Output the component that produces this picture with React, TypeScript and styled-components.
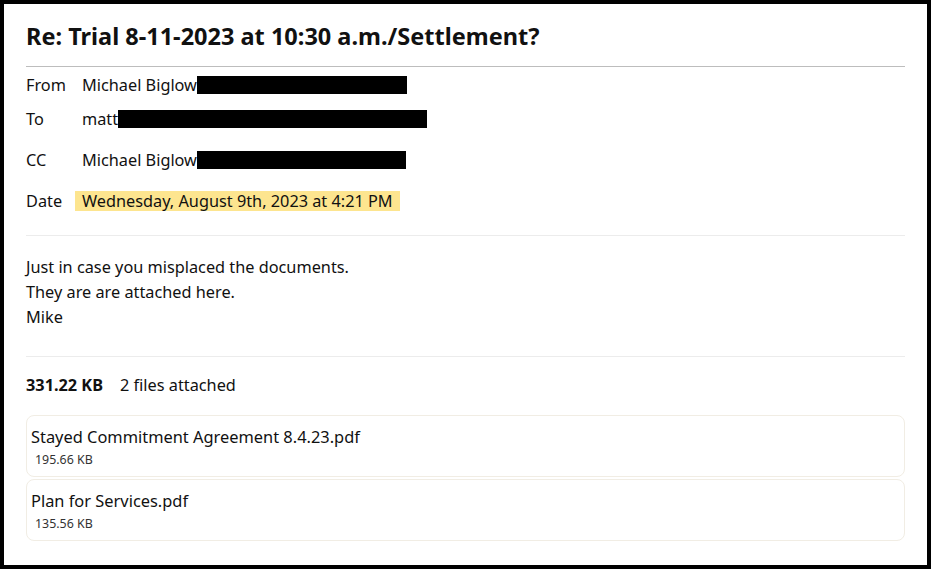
import React from 'react';
import styled, { createGlobalStyle } from 'styled-components';

const GlobalStyle = createGlobalStyle`
  html, body {
    margin: 0;
    padding: 0;
    background: #000;
  }
  body {
    font-family: "Noto Sans", "Open Sans", sans-serif;
    color: #111;
  }
`;

const Frame = styled.div`
  box-sizing: border-box;
  width: 931px;
  height: 569px;
  border: 4px solid #000;
  background: #fff;
  padding: 17px 22px 0 22px;
  overflow: hidden;
`;

const Subject = styled.h1`
  margin: 0;
  font-size: 23.5px;
  line-height: 31px;
  font-weight: 700;
  padding-bottom: 14px;
  border-bottom: 1px solid #bdbdbd;
`;

const Headers = styled.div`
  display: grid;
  grid-template-columns: 56px 1fr;
  padding-top: 1px;
  padding-bottom: 17px;
  border-bottom: 1px solid #ececec;
`;

const Label = styled.div<{ $h: number }>`
  height: ${(p) => p.$h}px;
  display: flex;
  align-items: center;
  font-size: 16.3px;
`;

const Value = styled.div<{ $h: number }>`
  height: ${(p) => p.$h}px;
  display: flex;
  align-items: center;
  font-size: 16.3px;
`;

const Redacted = styled.span<{ $w: number }>`
  display: inline-block;
  width: ${(p) => p.$w}px;
  height: 18px;
  background: #000;
`;

const Highlight = styled.span`
  margin-left: -7px;
  padding: 0 7px;
  height: 20px;
  line-height: 20px;
  background: #fde58f;
`;

const Body = styled.div`
  padding: 19px 0 26px 0;
  font-size: 16.3px;
  line-height: 25px;
  border-bottom: 1px solid #ececec;
`;

const Summary = styled.div`
  display: flex;
  gap: 17px;
  align-items: center;
  height: 60px;
  margin-top: -2px;
  font-size: 16.3px;
  strong {
    font-weight: 700;
  }
`;

const AttachmentList = styled.div`
  display: flex;
  flex-direction: column;
  gap: 2px;
`;

const Attachment = styled.div`
  box-sizing: border-box;
  height: 62px;
  border: 1px solid #f1ede4;
  border-radius: 8px;
  padding: 10px 4px 0 4px;
`;

const FileName = styled.div`
  font-size: 16.4px;
  line-height: 22px;
`;

const FileSize = styled.div`
  margin-top: 4px;
  padding-left: 4px;
  font-size: 12.4px;
  line-height: 16px;
  color: #333;
`;

const rows: { label: string; h: number; content: React.ReactNode }[] = [
  {
    label: 'From',
    h: 34,
    content: (
      <>
        Michael Biglow<Redacted $w={210} />
      </>
    ),
  },
  {
    label: 'To',
    h: 34,
    content: (
      <>
        matt<Redacted $w={309} />
      </>
    ),
  },
  {
    label: 'CC',
    h: 48,
    content: (
      <>
        Michael Biglow<Redacted $w={209} />
      </>
    ),
  },
  {
    label: 'Date',
    h: 34,
    content: <Highlight>Wednesday, August 9th, 2023 at 4:21 PM</Highlight>,
  },
];

const files = [
  { name: 'Stayed Commitment Agreement 8.4.23.pdf', size: '195.66 KB' },
  { name: 'Plan for Services.pdf', size: '135.56 KB' },
];

const App: React.FC = () => {
  return (
    <>
      <GlobalStyle />
      <Frame>
        <Subject>Re: Trial 8-11-2023 at 10:30 a.m./Settlement?</Subject>
        <Headers>
          {rows.map((r) => (
            <React.Fragment key={r.label}>
              <Label $h={r.h}>{r.label}</Label>
              <Value $h={r.h}>{r.content}</Value>
            </React.Fragment>
          ))}
        </Headers>
        <Body>
          Just in case you misplaced the documents.
          <br />
          They are are attached here.
          <br />
          Mike
        </Body>
        <Summary>
          <strong>331.22 KB</strong>
          <span>2 files attached</span>
        </Summary>
        <AttachmentList>
          {files.map((f) => (
            <Attachment key={f.name}>
              <FileName>{f.name}</FileName>
              <FileSize>{f.size}</FileSize>
            </Attachment>
          ))}
        </AttachmentList>
      </Frame>
    </>
  );
};

export default App;
